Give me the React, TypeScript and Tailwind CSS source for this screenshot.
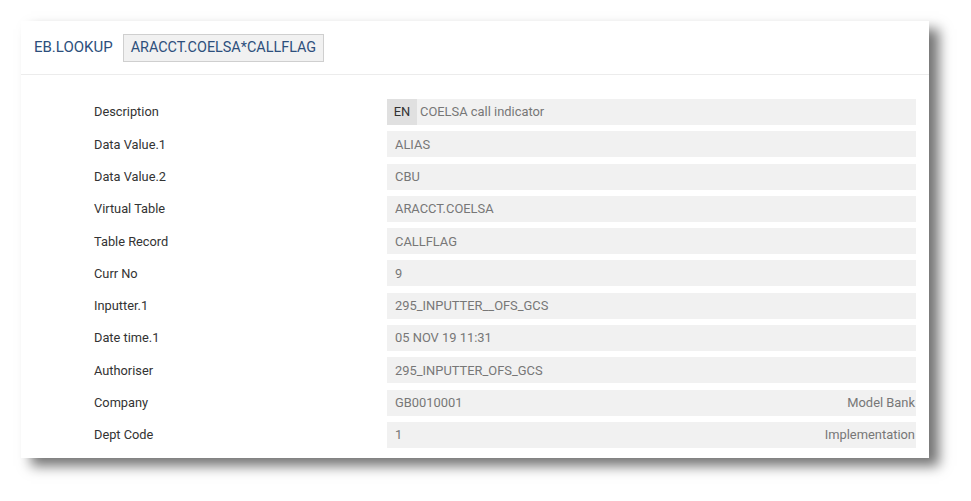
const rows: { label: string; value: string; lang?: string; right?: string }[] = [
  { label: "Description", value: "COELSA call indicator", lang: "EN" },
  { label: "Data Value.1", value: "ALIAS" },
  { label: "Data Value.2", value: "CBU" },
  { label: "Virtual Table", value: "ARACCT.COELSA" },
  { label: "Table Record", value: "CALLFLAG" },
  { label: "Curr No", value: "9" },
  { label: "Inputter.1", value: "295_INPUTTER__OFS_GCS" },
  { label: "Date time.1", value: "05 NOV 19 11:31" },
  { label: "Authoriser", value: "295_INPUTTER_OFS_GCS" },
  { label: "Company", value: "GB0010001", right: "Model Bank" },
  { label: "Dept Code", value: "1", right: "Implementation" },
];

export default function App() {
  return (
    <main className="w-[971px] h-[501px] bg-white pl-[21px] pt-[21px] font-['Roboto',sans-serif]">
      <div className="w-[908px] h-[437px] bg-white shadow-[10px_8px_12px_rgba(0,0,0,0.55)]">
        <div className="h-[54px] flex items-center pl-[13px] border-b border-[#ececec]">
          <span className="text-[15px] text-[#2d4f7c]">EB.LOOKUP</span>
          <span className="ml-[10px] h-[28px] px-[7px] flex items-center bg-[#f1f1f1] border border-[#cfcfcf] text-[14.4px] text-[#2d4f7c]">
            ARACCT.COELSA*CALLFLAG
          </span>
        </div>
        <div className="pt-[24px] pl-[73px] pr-[13px] flex flex-col gap-[6.3px]">
          {rows.map((r) => (
            <div key={r.label} className="flex items-center h-[26px]">
              <div className="w-[293px] text-[12.8px] text-[#333]">{r.label}</div>
              <div className="flex-1 h-[26px] bg-[#f1f1f1] flex items-center text-[12.9px] text-[#777]">
                {r.lang ? (
                  <span className="h-[26px] w-[30px] bg-[#e0e0e0] text-[#333] flex items-center justify-center mr-[3px]">
                    {r.lang}
                  </span>
                ) : (
                  <span className="w-[8px]" />
                )}
                <span>{r.value}</span>
                {r.right && <span className="ml-auto pr-[1px] text-[#777]">{r.right}</span>}
              </div>
            </div>
          ))}
        </div>
      </div>
    </main>
  );
}
